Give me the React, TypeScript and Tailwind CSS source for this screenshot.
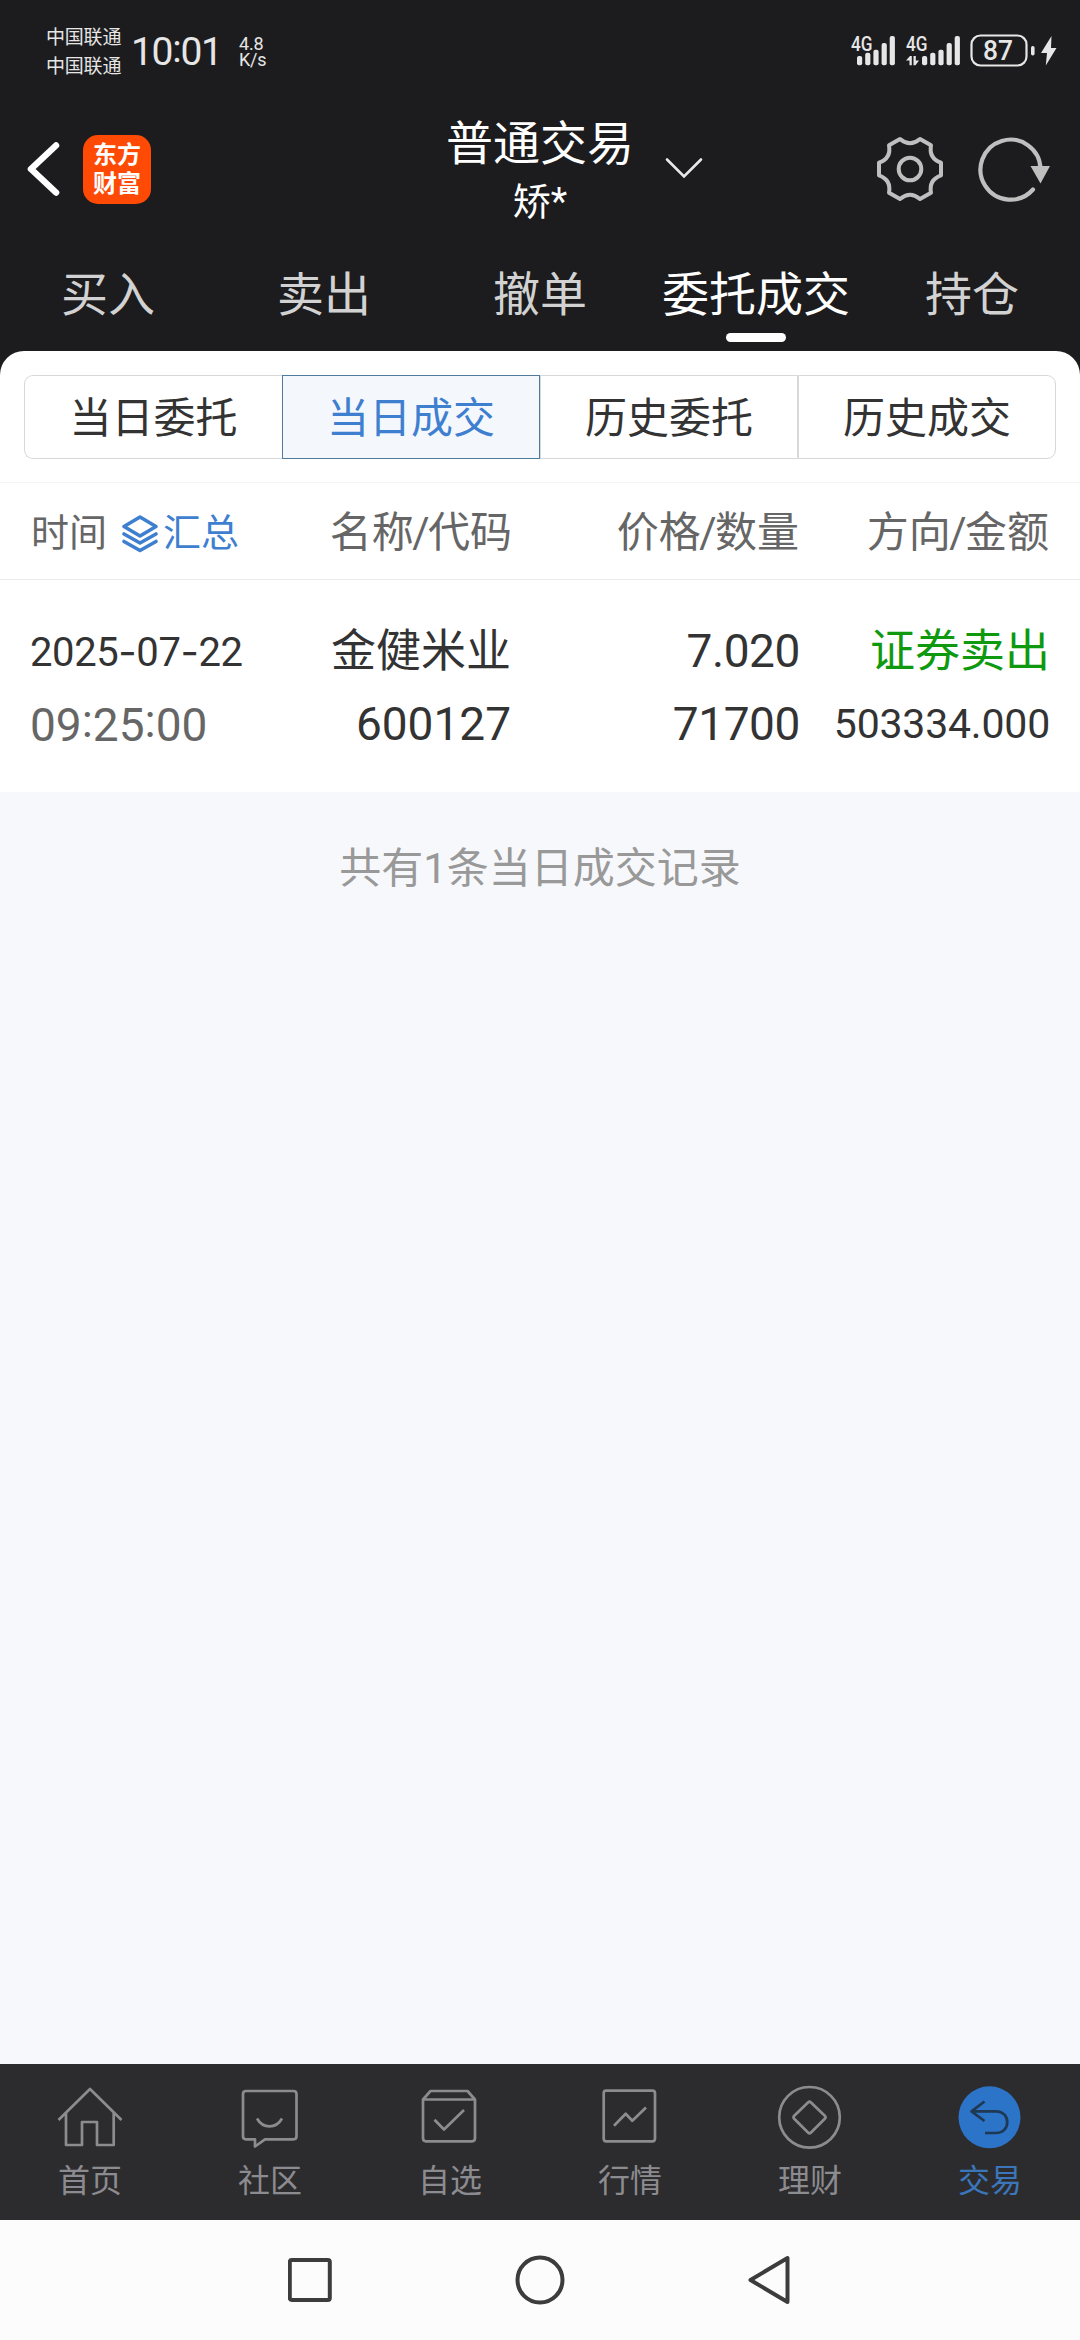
import React from 'react'

const tabs = ['买入', '卖出', '撤单', '委托成交', '持仓']
const segments = ['当日委托', '当日成交', '历史委托', '历史成交']

function Signal({ data }: { data?: boolean }) {
  const x = data ? 16 : 6
  return (
    <svg width={data ? 55 : 45} height="40" viewBox={data ? '0 -8 55 40' : '0 -8 45 40'} fill="#e6e6e6">
      <text x="0" y="16.5" fontSize="20" fontWeight="500" fontFamily="Roboto, sans-serif" textLength="21.5" lengthAdjust="spacingAndGlyphs">4G</text>
      <rect x={x} y="22" width="5.2" height="9.3" rx="2" />
      <rect x={x + 8.2} y="18.7" width="5.2" height="12.6" rx="2" />
      <rect x={x + 16.4} y="15.7" width="5.2" height="15.6" rx="2" />
      <rect x={x + 24.6} y="9" width="5.2" height="22.3" rx="2" />
      <rect x={x + 32.7} y="2" width="5.2" height="29.3" rx="2" />
      {data && <path d="M0 26.5L4 22h1.8v9.3H3.5V26.5zM7.5 22h2.3v4.5h3.200L9.500 31.300h-2z" />}
    </svg>
  )
}

function StatusBar() {
  return (
    <div className="flex h-[102px] text-[#e6e6e6]">
      <div className="ml-[46px] mt-[23px] w-[85px] text-[19px] leading-[29px] tracking-[-0.2px]">
        <div>中国联通</div>
        <div>中国联通</div>
      </div>
      <div className="mt-[32px] w-[108px] text-[39px] leading-[40px] tracking-[-1.3px]">
        10<span className="relative -top-[3px]">:</span>01
      </div>
      <div className="mt-[36px] text-[18px] leading-[16px] tracking-[-0.2px]">
        <div>4.8</div>
        <div>K/s</div>
      </div>
      <div className="ml-auto mr-[22px] mt-[26px] flex items-start">
        <Signal />
        <div className="ml-[10px]"><Signal data /></div>
        <svg className="ml-[9px] mt-[8px]" width="88" height="34" viewBox="0 0 88 34" fill="none">
          <rect x="1.5" y="1.5" width="55" height="30" rx="9" stroke="#e6e6e6" strokeWidth="2.2" />
          <text x="13" y="26" fontSize="28" fontWeight="500" fontFamily="Roboto, sans-serif" fill="#e6e6e6" textLength="30" lengthAdjust="spacingAndGlyphs">87</text>
          <rect x="61" y="12" width="3.6" height="9.5" rx="1.7" fill="#e6e6e6" />
          <path d="M81.5 2L71 19h6l-1.2 12.5L86.5 14h-5.5z" fill="#e6e6e6" />
        </svg>
      </div>
    </div>
  )
}

function Header() {
  return (
    <div className="flex h-[128px] items-start text-white">
      <svg className="ml-[26px] mt-[38px]" width="36" height="58" viewBox="0 0 36 58" fill="none" stroke="#fff" strokeWidth="6.5" strokeLinecap="round" strokeLinejoin="round">
        <path d="M30 5.5L5 29L30 52.5" />
      </svg>
      <div className="ml-[21px] mt-[33px] flex h-[69px] w-[68px] flex-col items-center justify-center rounded-[15px] bg-[#ff4a05] text-[24px] leading-[29px] font-bold">
        <div>东方</div>
        <div>财富</div>
      </div>
      <div className="ml-[235px] w-[308px] pt-[11px] text-center">
        <div className="flex h-[62px] items-center justify-center text-[47px]">普通交易</div>
        <div className="flex h-[54px] items-center justify-center text-[38px]">矫*</div>
      </div>
      <svg className="-ml-[30px] mt-[54px]" width="40" height="24" viewBox="0 0 40 24" fill="none" stroke="#e8e8e8" strokeWidth="2.6" strokeLinecap="round">
        <path d="M3 3.500L20 20.500L37 3.500" />
      </svg>
      <svg className="ml-auto mt-[33px]" width="68" height="68" viewBox="-34 -34 68 68" fill="none" stroke="#bfbfbf" strokeWidth="4" strokeLinejoin="round">
        <path d="M-10 -30Q0 -21.500 10 -30L21 -23.700Q18.600 -10.800 31 -6.300V6.300Q18.600 10.800 21 23.700L10 30Q0 21.500 -10 30L-21 23.700Q-18.600 10.800 -31 6.300V-6.300Q-18.600 -10.800 -21 -23.700Z" />
        <circle r="11.3" />
      </svg>
      <svg className="ml-[33px] mr-[28px] mt-[33px]" width="75" height="68" viewBox="-34 -34 75 68" fill="none">
        <path d="M29.500 0A30 30 0 1 0 22 20.500" stroke="#bfbfbf" strokeWidth="4.2" strokeLinecap="round" />
        <path d="M19.500 -3H39L29.500 14.500Z" fill="#bfbfbf" />
      </svg>
    </div>
  )
}

const icons = [
  <path d="M1.5 35L33 4L64.5 35M9 28V60H25V37H40V60H56.7V28" />,
  <path d="M9 6H56.5Q59.5 6 59.5 9V51.3Q59.5 54.3 56.5 54.3H28L18 61.5V54.3H9Q6 54.3 6 51.3V9Q6 6 9 6ZM20 33.5C26 44 39 44 45 33.5" />,
  <path d="M6 14.5L13.5 6H50.5L58 14.5V53Q58 56.3 55 56.3H9Q6 56.3 6 53ZM6 14.5H58M17.5 34.7L27 44.5L47 25" />,
  <path d="M9 5.7H55.5Q58 5.7 58 8.5V53.5Q58 56.3 55.5 56.3H9Q6.7 56.3 6.7 53.5V8.5Q6.7 5.7 9 5.7ZM17 40.7L28.7 28.7L35.3 35.7L49 22.5" />,
  <>
    <circle cx="32.5" cy="32.3" r="30.3" />
    <path d="M31 17.5Q32.5 16 34 17.5L47.8 30.8Q49.3 32.3 47.8 33.8L34 47.5Q32.5 49 31 47.5L17.2 33.8Q15.7 32.3 17.2 30.8Z" />
  </>,
  <>
    <circle cx="32.5" cy="32.3" r="31" fill="#2b74c7" stroke="none" />
    <path d="M27.5 16.5L14.5 26.3L27.5 36M14.5 26.3H39C54 26.3 54 48 39 48H28" stroke="#1f3854" />
  </>,
]
const navs = ['首页', '社区', '自选', '行情', '理财', '交易']

function BottomNav() {
  return (
    <div className="flex h-[156px] bg-[#2c2c2e]">
      {navs.map((name, i) => (
        <div key={name} className={`flex w-[180px] flex-col items-center pt-[21px] text-[32px] leading-[40px] ${i === 5 ? 'text-[#3c76ba]' : 'text-[#8c8b90]'}`}>
          <svg width="66" height="66" viewBox="0 0 66 66" fill="none" stroke="#8c8b90" strokeWidth="2.7" strokeLinejoin="round">
            {icons[i]}
          </svg>
          <div className="mt-[10px]">{name}</div>
        </div>
      ))}
    </div>
  )
}

const Slash = () => <span className="-mx-[1.5px]">/</span>

function App() {
  return (
    <div className="flex h-[2340px] w-[1080px] flex-col overflow-hidden bg-[#f7f8fb] font-[Roboto,'Noto_Sans_CJK_SC',sans-serif]">
      <div className="bg-[#1c1c1e]">
        <StatusBar />
        <Header />
        <div className="flex h-[121px]">
          {tabs.map((tab, i) => (
            <div key={tab} className={`flex w-[216px] flex-col items-center pt-[33px] text-[47px] leading-[64px] ${i === 3 ? 'text-white' : 'text-[#d2d2d2]'}`}>
              {tab}
              {i === 3 && <div className="mt-[6px] h-[9px] w-[60px] rounded-full bg-white" />}
            </div>
          ))}
        </div>
        <div className="h-[131px] rounded-t-[24px] bg-white px-[24px] pt-[24px]">
          <div className="flex h-[84px] text-[42px] text-[#333]">
            {segments.map((s, i) => (
              <div
                key={s}
                className={`flex w-[258px] items-center justify-center border pt-[2px] ${
                  i === 1 ? 'border-[#4f7a9c] bg-[#f4f8fd] text-[#3f7fd0]' : 'border-[#d6d8da]'
                } ${i === 0 ? 'rounded-l-[9px] border-r-0' : ''} ${i === 3 ? 'rounded-r-[9px]' : ''}`}
              >
                {s}
              </div>
            ))}
          </div>
        </div>
      </div>

      <div className="flex h-[98px] items-center border-y border-t-[#f5f5f5] border-b-[#ebebeb] bg-white px-[31px] pt-[2px] text-[42px] text-[#666]">
        <div className="flex w-[210px] items-center pt-[2px] text-[38px]">
          时间
          <svg className="ml-[14px] mr-[4px] mt-[2px] shrink-0" width="38" height="40" viewBox="0 0 38 40" fill="none" stroke="#3f7fd0" strokeWidth="3.6" strokeLinejoin="round" strokeLinecap="round">
            <path d="M19 3L35 12.500L19 22L3 12.500ZM3 20L19 29L35 20M3 27.500L19 36.500L35 27.500" />
          </svg>
          <span className="shrink-0 text-[#3f7fd0]">汇总</span>
        </div>
        <div className="w-[271px] text-right">名称<Slash />代码</div>
        <div className="w-[287px] text-right">价格<Slash />数量</div>
        <div className="w-[250px] text-right">方向<Slash />金额</div>
      </div>

      <div className="flex h-[212px] bg-white pl-[30px] pr-[30px] pt-[35px] text-[46px] leading-[73px] text-[#333]">
        <div className="w-[231px]">
          <div className="text-[40px] tracking-[-0.4px]">
            2025<span className="font-[Inter]">-</span>07<span className="font-[Inter]">-</span>22
          </div>
          <div className="text-[#666]">
            09<span className="relative -top-[4px]">:</span>25<span className="relative -top-[4px]">:</span>00
          </div>
        </div>
        <div className="w-[250px] text-right">
          <div className="h-[73px] text-[45px]">金健米业</div>
          <div>600127</div>
        </div>
        <div className="w-[289px] text-right tracking-[-0.4px]">
          <div>7.020</div>
          <div>71700</div>
        </div>
        <div className="w-[250px] text-right">
          <div className="h-[73px] text-[45px] text-[#0f990f]">证券卖出</div>
          <div className="text-[41px] tracking-[-0.2px]">503334.000</div>
        </div>
      </div>

      <div className="flex-1 pt-[47px] text-center text-[42px] leading-[60px] text-[#999]">共有1条当日成交记录</div>

      <BottomNav />
      <div className="flex h-[120px] items-center justify-center bg-[#fcfcfc]">
        <svg width="504" height="52" viewBox="0 0 504 52" fill="none" stroke="#3c3c3c" strokeWidth="4" strokeLinejoin="round">
          <rect x="1.8" y="6" width="40" height="40" rx="2" />
          <circle cx="252" cy="26" r="22.5" />
          <path d="M462.500 26L499.500 4V48Z" />
        </svg>
      </div>
    </div>
  )
}

export default App
